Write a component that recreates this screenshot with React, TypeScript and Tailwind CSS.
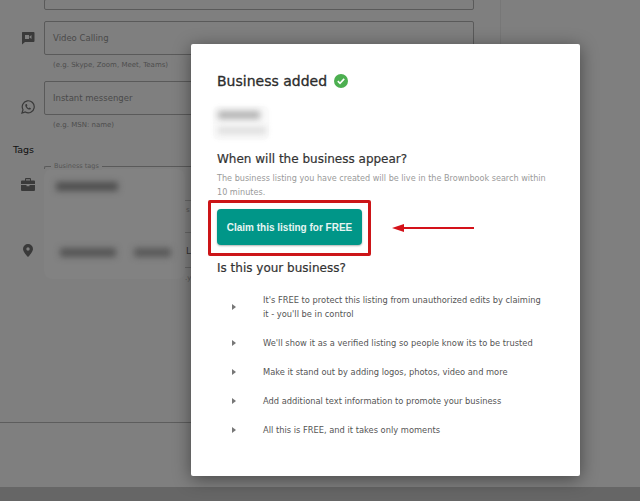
const items = [
  { text: "It's FREE to protect this listing from unauthorized edits by claiming it - you'll be in control", h: 'h-[29px]' },
  { text: "We'll show it as a verified listing so people know its to be trusted", h: 'h-[14px]' },
  { text: 'Make it stand out by adding logos, photos, video and more', h: 'h-[14px]' },
  { text: 'Add additional text information to promote your business', h: 'h-[14px]' },
  { text: 'All this is FREE, and it takes only moments', h: 'h-[14px]' },
];

function Field({ label, hint, icon }: { label: string; hint: string; icon: React.ReactNode }) {
  return (
    <div className="flex">
      <div className="w-[44px] flex justify-center items-center h-[34px] pl-[12px] text-[#3a3a3a]">{icon}</div>
      <div>
        <div className="w-[430px] h-[34px] border border-[#5a5a5a] rounded-[2px] flex items-center pl-[8px] text-[8.5px] text-[#4a4a4a]">
          {label}
        </div>
        <p className="mt-[5px] ml-[9px] text-[7px] leading-[10px] text-[#4d4d4d]">{hint}</p>
      </div>
    </div>
  );
}

export default function App() {
  return (
    <div className="relative w-[640px] h-[501px] overflow-hidden bg-[#7f7f7f] font-['DejaVu_Sans',sans-serif] flex flex-col">
      {/* page behind the dialog */}
      <div className="h-[423px] flex flex-col">
        <div className="flex items-start h-[10px] pl-[44px]">
          <div className="w-[430px] h-[11px] -mt-px border border-[#5a5a5a] rounded-[2px]" />
          <div className="ml-[26px] h-[44px] border-l border-[#777]" />
        </div>
        <div className="mt-[11px] flex flex-col gap-[11px]">
          <Field
            label="Video Calling"
            hint="(e.g. Skype, Zoom, Meet, Teams)"
            icon={
              <svg width="14" height="14" viewBox="0 0 14 14">
                <path d="M1.5 1h11a1 1 0 0 1 1 1v8a1 1 0 0 1-1 1H4l-3 2.5V2a.8.8 0 0 1 .5-1z" fill="#3a3a3a" />
                <path d="M4 4h4v4H4zM8.500 5.500 10.500 4v4L8.500 6.500z" fill="#7f7f7f" />
              </svg>
            }
          />
          <Field
            label="Instant messenger"
            hint="(e.g. MSN: name)"
            icon={
              <svg width="14" height="14" viewBox="0 0 14 14" className="mt-[18px]">
                <path d="M1 13l1-3.300A6 6 0 1 1 4.300 12z" fill="none" stroke="#3a3a3a" strokeWidth="1.200" />
                <path d="M5 4c-1 .6-1 1.800 0 3.200S7.500 9.800 9 9.500c1-.3 1-1 .8-1.300L8.500 7.500l-.7.7C7 8 6 7 5.800 6.200l.6-.7L5.700 4z" fill="#3a3a3a" />
              </svg>
            }
          />
        </div>
        <p className="mt-[14px] ml-[13px] text-[9.500px] leading-[12px] text-[#111]">Tags</p>

        <div className="flex mt-[10px]">
          <div className="w-[44px] flex flex-col items-center pl-[12px] pt-[12px] gap-[53px]">
            <svg width="14" height="13" viewBox="0 0 14 13">
              <path d="M5 0h4a1 1 0 0 1 1 1v1.500h3a1 1 0 0 1 1 1V6H0V3.500a1 1 0 0 1 1-1h3V1a1 1 0 0 1 1-1zm0 1.200v1.300h4V1.200zM0 7h5.500v1.200h3V7H14v5a1 1 0 0 1-1 1H1a1 1 0 0 1-1-1z" fill="#3a3a3a" />
            </svg>
            <svg width="10" height="13" viewBox="0 0 10 13">
              <path d="M5 0a5 5 0 0 1 5 5c0 3-5 8-5 8S0 8 0 5a5 5 0 0 1 5-5zm0 3.300a1.700 1.700 0 1 0 0 3.400 1.700 1.700 0 0 0 0-3.400z" fill="#3a3a3a" />
            </svg>
          </div>
          <div className="w-[430px]">
            <div className="relative h-[3px] border-t border-l border-[#5a5a5a] rounded-tl-[2px]">
              <span className="absolute left-[6px] -top-[5px] bg-[#7f7f7f] px-[3px] text-[6.500px] leading-[8px] text-[#555]">Business tags</span>
            </div>
            <div className="flex">
              {/* blurred tags */}
              <div className="w-[141px] h-[110px] rounded-[8px] bg-[#828282] pt-[13px] pl-[12px]">
                <div className="w-[62px] h-[9px] rounded-[2px] bg-[#4f4f4f] blur-[3px]" />
                <div className="mt-[57px] pl-[4px] flex gap-[18px]">
                  <div className="w-[56px] h-[9px] rounded-[2px] bg-[#555555] blur-[3px]" />
                  <div className="w-[37px] h-[9px] rounded-[2px] bg-[#595959] blur-[3px]" />
                </div>
              </div>
              {/* field edges that show next to the blurred tags */}
              <div className="w-[50px] pt-[31px] text-[7px] leading-[8px] text-[#555]">
                <div className="h-[32px] border-t border-[#666] pt-[5px] pl-[1px]">s</div>
                <div className="h-[35px] border-t border-[#666] pt-[13px] pl-[1px] text-[9px] leading-[10px] text-[#333]">L</div>
                <div className="border-t border-[#666] pt-[6px]">.yp</div>
              </div>
            </div>
          </div>
        </div>

        <div className="mt-auto w-[191px] border-b border-[#5d5d5d]" />
      </div>
      <div className="mt-auto h-[14px] bg-[#666666]" />

      {/* dialog */}
      <div className="absolute left-[191px] top-[44px] w-[389px] h-[432px] bg-white rounded-[2px] shadow-[0_3px_18px_rgba(0,0,0,0.45)] pl-[26px] pr-[28px] pt-[28px]">
        <div className="flex items-center gap-[7px]">
          <h2 className="text-[14px] leading-[18px] text-[#2c2c2c] [-webkit-text-stroke:0.3px_#2c2c2c]">Business added</h2>
          <svg width="14" height="14" viewBox="0 0 14 14">
            <circle cx="7" cy="7" r="7" fill="#4caf50" />
            <path d="M3.800 7.200 6 9.300l4.200-4.400" fill="none" stroke="#fff" strokeWidth="1.600" />
          </svg>
        </div>
        <div className="mt-[16px] -ml-[4px] w-[56px] h-[34px] rounded-[6px] bg-[#fafafa] shadow-[0_0_6px_#fafafa] flex flex-col pt-[5px] pl-[5px] gap-[8px]">
          <div className="w-[42px] h-[8px] bg-[#b0b0b0] blur-[3px]" />
          <div className="w-[48px] h-[7px] bg-[#dcdcdc] blur-[3px]" />
        </div>
        <h3 className="mt-[11px] text-[12px] leading-[16px] text-[#333] [-webkit-text-stroke:0.2px_#333]">When will the business appear?</h3>
        <p className="mt-[4px] text-[8.100px] leading-[14px] text-[#9a9a9a]">
          The business listing you have created will be live in the Brownbook search within 10 minutes.
        </p>
        <div className="mt-px flex items-center">
          <div className="-ml-[9px] pt-[6px] pb-[8px] px-[6px] border-[3px] border-[#cc1518] rounded-[2px]">
            <button className="block w-[145px] h-[36px] rounded-[4px] bg-[#009688] font-['Liberation_Sans',sans-serif] text-[10px] font-bold text-[#e6f5f3] shadow-[0_1px_2px_rgba(0,0,0,0.3)]">
              Claim this listing for FREE
            </button>
          </div>
          <svg width="84" height="12" viewBox="0 0 84 12" className="ml-[21px]">
            <path d="M0 6 12 2v3h70v2H12v3z" fill="#d4121a" />
          </svg>
        </div>
        <h3 className="mt-[4px] text-[12px] leading-[16px] text-[#333] [-webkit-text-stroke:0.2px_#333]">Is this your business?</h3>
        <ul className="mt-[16px] flex flex-col gap-[15px]">
          {items.map((item) => (
            <li key={item.text} className={`flex items-center ${item.h}`}>
              <svg width="4" height="6" viewBox="0 0 4 6" className="ml-[15px] mr-[27px] shrink-0">
                <path d="M0 0l4 3-4 3z" fill="#777" />
              </svg>
              <span className="w-[278px] text-[8.300px] leading-[14px] text-[#555]">{item.text}</span>
            </li>
          ))}
        </ul>
      </div>
    </div>
  );
}
